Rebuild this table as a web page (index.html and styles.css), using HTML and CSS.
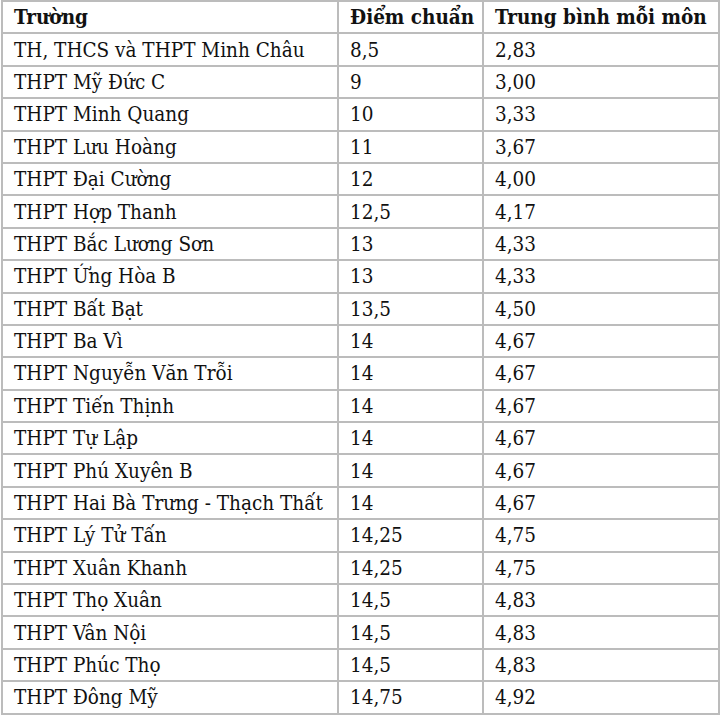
FILE: index.html
```html
<!DOCTYPE html>
<html lang="vi">
<head>
<meta charset="utf-8">
<link rel="stylesheet" href="styles.css">
</head>
<body>
<table class="scores">
  <colgroup>
    <col class="c1"><col class="c2"><col class="c3">
  </colgroup>
  <thead>
    <tr><th>Trường</th><th>Điểm chuẩn</th><th>Trung bình mỗi môn</th></tr>
  </thead>
  <tbody>
    <tr><td>TH, THCS và THPT Minh Châu</td><td>8,5</td><td>2,83</td></tr>
    <tr><td>THPT Mỹ Đức C</td><td>9</td><td>3,00</td></tr>
    <tr><td>THPT Minh Quang</td><td>10</td><td>3,33</td></tr>
    <tr><td>THPT Lưu Hoàng</td><td>11</td><td>3,67</td></tr>
    <tr><td>THPT Đại Cường</td><td>12</td><td>4,00</td></tr>
    <tr><td>THPT Hợp Thanh</td><td>12,5</td><td>4,17</td></tr>
    <tr><td>THPT Bắc Lương Sơn</td><td>13</td><td>4,33</td></tr>
    <tr><td>THPT Ứng Hòa B</td><td>13</td><td>4,33</td></tr>
    <tr><td>THPT Bất Bạt</td><td>13,5</td><td>4,50</td></tr>
    <tr><td>THPT Ba Vì</td><td>14</td><td>4,67</td></tr>
    <tr><td>THPT Nguyễn Văn Trỗi</td><td>14</td><td>4,67</td></tr>
    <tr><td>THPT Tiến Thịnh</td><td>14</td><td>4,67</td></tr>
    <tr><td>THPT Tự Lập</td><td>14</td><td>4,67</td></tr>
    <tr><td>THPT Phú Xuyên B</td><td>14</td><td>4,67</td></tr>
    <tr><td>THPT Hai Bà Trưng - Thạch Thất</td><td>14</td><td>4,67</td></tr>
    <tr><td>THPT Lý Tử Tấn</td><td>14,25</td><td>4,75</td></tr>
    <tr><td>THPT Xuân Khanh</td><td>14,25</td><td>4,75</td></tr>
    <tr><td>THPT Thọ Xuân</td><td>14,5</td><td>4,83</td></tr>
    <tr><td>THPT Vân Nội</td><td>14,5</td><td>4,83</td></tr>
    <tr><td>THPT Phúc Thọ</td><td>14,5</td><td>4,83</td></tr>
    <tr><td>THPT Đông Mỹ</td><td>14,75</td><td>4,92</td></tr>
  </tbody>
</table>
</body>
</html>
```

FILE: styles.css
```css
html, body {
  margin: 0;
  padding: 0;
  background: #ffffff;
}
body {
  padding: 0 0 0 1px;
}
.scores {
  border-collapse: collapse;
  table-layout: fixed;
  width: 717px;
  font-family: "DejaVu Serif Condensed", "DejaVu Serif", serif;
  font-stretch: condensed;
  font-size: 20.5px;
  color: #111111;
}
.scores th, .scores td {
  box-sizing: border-box;
  border: 2px solid #bcbcbc;
  padding: 0 0 0 11px;
  height: 32.4px;
  text-align: left;
  white-space: nowrap;
  overflow: hidden;
  font-weight: normal;
}
.scores th {
  font-weight: bold;
}
.c1 { width: 336px; }
.c2 { width: 145px; }
.c3 { width: 236px; }
```
